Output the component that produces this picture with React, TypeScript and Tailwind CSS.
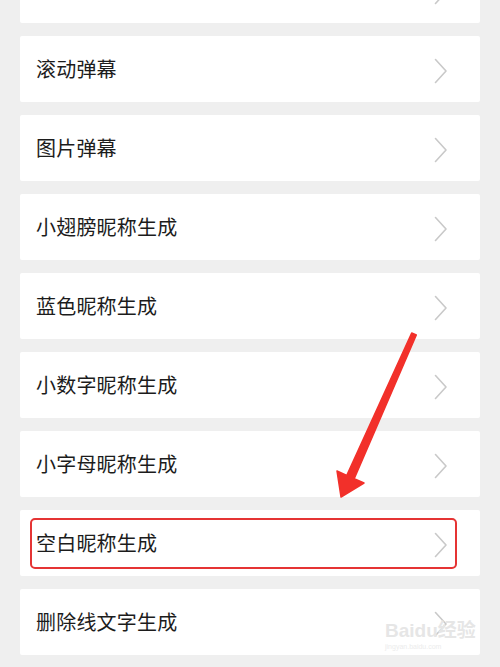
import React from 'react'

const items = [
  '',
  '滚动弹幕',
  '图片弹幕',
  '小翅膀昵称生成',
  '蓝色昵称生成',
  '小数字昵称生成',
  '小字母昵称生成',
  '空白昵称生成',
  '删除线文字生成',
]

const Chevron = () => (
  <svg width="14" height="26" viewBox="0 0 14 26" fill="none" className="mt-[3px]">
    <path d="M1.5 1.5 L12 13 L1.5 24.5" stroke="#c9c9c9" strokeWidth="1.6" strokeLinecap="round" strokeLinejoin="round" />
  </svg>
)

const Row = ({ label, marked }: { label: string; marked?: boolean }) => (
  <div className="relative h-[66px] shrink-0 bg-white rounded-[2px] flex items-center justify-between pl-[16px] pr-[32px]">
    <span className="text-[20px] leading-none text-[#1c1c1c] tracking-[0.2px]">{label}</span>
    <Chevron />
    {marked && (
      <div className="absolute left-[10px] right-[23px] top-[8px] bottom-[7px] border-2 border-[#e53434] rounded-[5px]" />
    )}
  </div>
)

export default function App() {
  return (
    <div
      className="relative w-[500px] h-[667px] overflow-hidden bg-[#efefef]"
      style={{ fontFamily: '"Noto Sans CJK SC", "Noto Sans", sans-serif' }}
    >
      <div className="flex flex-col gap-[13px] px-[20px] mt-[-43px]">
        {items.map((label, i) => (
          <Row key={i} label={label} marked={i === 7} />
        ))}
      </div>

      <svg className="absolute inset-0" width="500" height="667" viewBox="0 0 500 667">
        <polygon
          points="416.3,335 354.2,478.6 364,483 341,497 337,471 346.8,475.4 411.7,333"
          fill="#f2302a"
          stroke="#f2302a"
          strokeWidth="1.5"
          strokeLinejoin="round"
        />
      </svg>

      <div className="absolute left-[385px] top-[621px] text-[#e6e6e6] leading-none select-none">
        <div className="text-[19px] font-bold" style={{ fontFamily: '"Liberation Sans", "Noto Sans CJK SC", sans-serif' }}>
          Baidu经验
        </div>
        <div className="text-[7px] mt-[3px] text-[#ececec]" style={{ fontFamily: '"Liberation Sans", sans-serif' }}>
          jingyan.baidu.com
        </div>
      </div>
    </div>
  )
}
